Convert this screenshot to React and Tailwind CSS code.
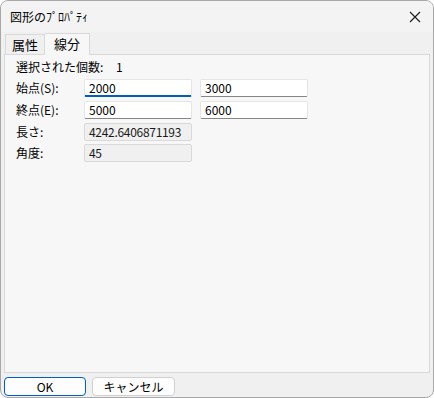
import React from "react";

const font = { fontFamily: '"Noto Sans CJK JP", "Noto Sans", sans-serif' };

function Field({ value, focused, readOnly }) {
  if (readOnly) {
    return (
      <div className="h-[18px] w-[108px] border border-[#d9d9d9] bg-[#f0f0f0] pl-[4px] text-[12px] leading-[16px] text-[#1a1a1a] rounded-[2px] tracking-[-0.3px]">
        {value}
      </div>
    );
  }
  return (
    <div
      className={
        "h-[18px] w-[108px] bg-white pl-[4px] text-[12px] leading-[16px] text-black border border-[#e5e5e5] rounded-[2px] " +
        (focused ? "border-b-2 border-b-[#005fb8]" : "border-b-[#868686]")
      }
    >
      {value}
    </div>
  );
}

export default function App() {
  return (
    <div className="w-[434px] h-[398px] bg-[#f0f0f0] flex flex-col overflow-hidden rounded-[8px] border border-[#a8a8a8]" style={font}>
      <div className="h-[31px] shrink-0 flex items-center justify-between pl-[9px] pr-[8px] bg-[#f3f3f3]">
        <span className="text-[12px] text-black">図形のﾌﾟﾛﾊﾟﾃｨ</span>
        <svg width="14" height="14" viewBox="0 0 14 14" className="mr-[3px]">
          <path d="M2 2 L12 12 M12 2 L2 12" stroke="#1a1a1a" strokeWidth="1.1" />
        </svg>
      </div>
      <div className="flex items-end pl-[4px] h-[22px] shrink-0">
        <div className="h-[20px] px-[6px] border border-[#d9d9d9] border-b-0 text-[13px] leading-[20px] text-black bg-[#f0f0f0]">属性</div>
        <div className="h-[22px] px-[9px] border border-[#d9d9d9] border-b-0 border-l-0 text-[13px] leading-[20px] text-black bg-[#f7f7f7] -mb-px relative z-10">線分</div>
      </div>
      <div className="mx-[3px] h-[319px] shrink-0 border border-[#d9d9d9] bg-[#f7f7f7] pl-[11px] pt-[1px] text-[12px] text-black">
        <div className="flex h-[21px] items-center">
          <span className="w-[100px]">選択された個数:</span>
          <span>1</span>
        </div>
        <div className="flex h-[22px] items-center">
          <span className="w-[68px]">始点(S):</span>
          <Field value="2000" focused />
          <div className="w-[8px]" />
          <Field value="3000" />
        </div>
        <div className="flex h-[22px] items-center">
          <span className="w-[68px]">終点(E):</span>
          <Field value="5000" />
          <div className="w-[8px]" />
          <Field value="6000" />
        </div>
        <div className="flex h-[21px] items-center">
          <span className="w-[68px]">長さ:</span>
          <Field value="4242.6406871193" readOnly />
        </div>
        <div className="flex h-[21px] items-center">
          <span className="w-[68px]">角度:</span>
          <Field value="45" readOnly />
        </div>
      </div>
      <div className="flex gap-[6px] pl-[3px] pt-[4px]">
        <button className="w-[82px] h-[19px] rounded-[4px] border border-[#005fb8] bg-[#fdfdfd] text-[12px] leading-[16px] text-black">OK</button>
        <button className="w-[83px] h-[19px] rounded-[4px] border border-[#d0d0d0] bg-[#fdfdfd] text-[12px] leading-[16px] text-black">キャンセル</button>
      </div>
    </div>
  );
}
